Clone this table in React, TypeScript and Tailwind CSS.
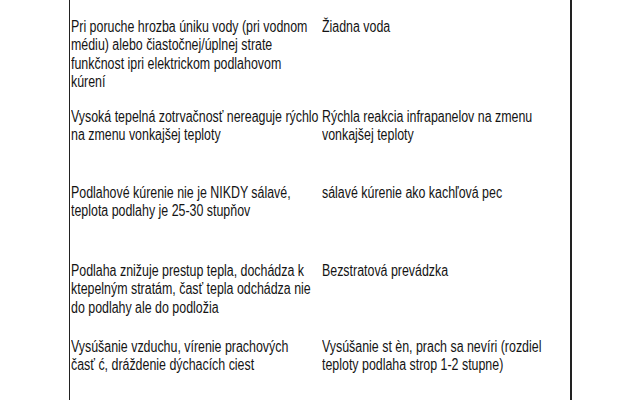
const rows: { h: string; left: string[]; right: string[] }[] = [
  {
    h: "h-[90px]",
    left: [
      "Pri poruche hrozba úniku vody (pri vodnom",
      "médiu) alebo čiastočnej/úplnej strate",
      "funkčnost ipri elektrickom podlahovom",
      "kúrení",
    ],
    right: ["Žiadna voda"],
  },
  {
    h: "h-[76px]",
    left: ["Vysoká tepelná zotrvačnosť nereaguje rýchlo", "na zmenu vonkajšej teploty"],
    right: ["Rýchla reakcia infrapanelov na zmenu", "vonkajšej teploty"],
  },
  {
    h: "h-[78px]",
    left: ["Podlahové kúrenie nie je NIKDY sálavé,", "teplota podlahy je 25-30 stupňov"],
    right: ["sálavé kúrenie ako kachľová pec"],
  },
  {
    h: "h-[76px]",
    left: [
      "Podlaha znižuje prestup tepla, dochádza k",
      "ktepelným stratám, časť tepla odchádza nie",
      "do podlahy ale do podložia",
    ],
    right: ["Bezstratová prevádzka"],
  },
  {
    h: "h-[62px]",
    left: ["Vysúšanie vzduchu, vírenie prachových", "časť ć, dráždenie dýchacích ciest"],
    right: ["Vysúšanie st èn, prach sa nevíri (rozdiel", "teploty podlaha strop 1-2 stupne)"],
  },
];

function Lines({ lines }: { lines: string[] }) {
  return (
    <div className="text-[16px] leading-[18.3px]">
      {lines.map((l, j) => (
        <div key={j} className="h-[18.3px] whitespace-nowrap">
          <span className="inline-block origin-left scale-x-[0.775]">{l}</span>
        </div>
      ))}
    </div>
  );
}

export default function App() {
  return (
    <div className="flex h-[400px] w-[640px] overflow-hidden bg-white text-[#141414] [font-family:'Liberation_Sans',Arial,sans-serif]">
      <div className="w-[69px] shrink-0" />
      <div className="w-[503px] shrink-0 border-l border-r-2 border-l-[#222] border-r-[#222] pt-[18px]">
        {rows.map((r, i) => (
          <div key={i} className={`grid grid-cols-[252px_1fr] ${r.h}`}>
            <div className="pl-[1px]">
              <Lines lines={r.left} />
            </div>
            <Lines lines={r.right} />
          </div>
        ))}
      </div>
    </div>
  );
}
